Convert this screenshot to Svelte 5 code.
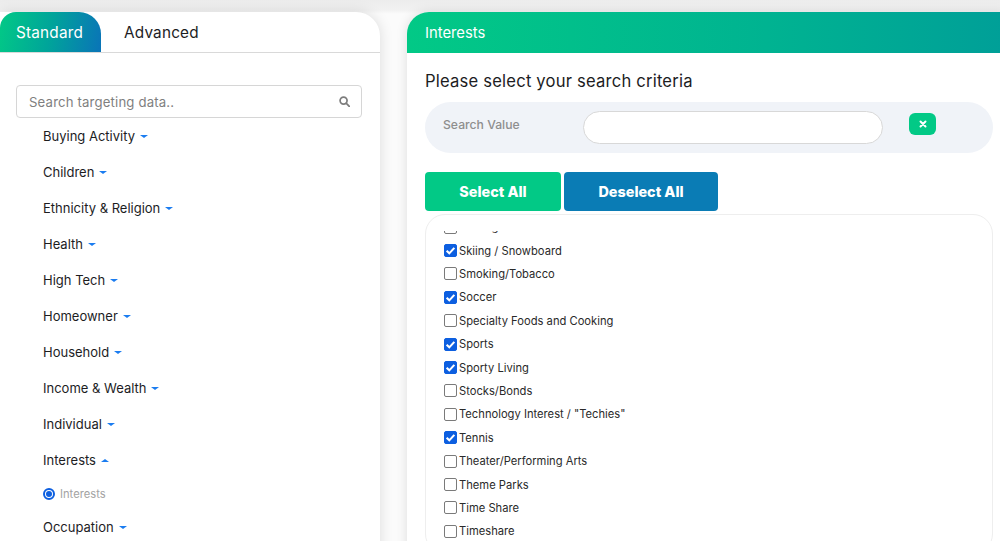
<script>
  const categories = [
    { name: 'Buying Activity' },
    { name: 'Children' },
    { name: 'Ethnicity & Religion' },
    { name: 'Health' },
    { name: 'High Tech' },
    { name: 'Homeowner' },
    { name: 'Household' },
    { name: 'Income & Wealth' },
    { name: 'Individual' },
    { name: 'Interests', open: true, sub: 'Interests' },
    { name: 'Occupation' }
  ];

  const interests = [
    { label: 'Skating', on: false },
    { label: 'Skiing / Snowboard', on: true },
    { label: 'Smoking/Tobacco', on: false },
    { label: 'Soccer', on: true },
    { label: 'Specialty Foods and Cooking', on: false },
    { label: 'Sports', on: true },
    { label: 'Sporty Living', on: true },
    { label: 'Stocks/Bonds', on: false },
    { label: 'Technology Interest / "Techies"', on: false },
    { label: 'Tennis', on: true },
    { label: 'Theater/Performing Arts', on: false },
    { label: 'Theme Parks', on: false },
    { label: 'Time Share', on: false },
    { label: 'Timeshare', on: false }
  ];
</script>

<div class="page">
  <section class="left-card">
    <div class="tabs">
      <button type="button" class="tab active">Standard</button>
      <button type="button" class="tab">Advanced</button>
    </div>
    <div class="left-body">
      <div class="search-box">
        <span class="placeholder">Search targeting data..</span>
        <svg width="11" height="11" viewBox="0 0 12 12" fill="none" stroke="#7d7d7d" stroke-width="1.9">
          <circle cx="5" cy="5" r="3.8" />
          <path d="M8 8l3.2 3.2" stroke-linecap="round" />
        </svg>
      </div>
      <ul class="categories">
        {#each categories as cat}
          <li class="category">
            <span>{cat.name}</span>
            <i class="caret" class:up={cat.open}></i>
          </li>
          {#if cat.sub}
            <li class="sub">
              <i class="radio"></i>
              <span>{cat.sub}</span>
            </li>
          {/if}
        {/each}
      </ul>
    </div>
  </section>

  <section class="right-card">
    <header class="right-head">Interests</header>
    <div class="right-body">
      <h2>Please select your search criteria</h2>
      <div class="criteria">
        <span class="criteria-label">Search Value</span>
        <div class="criteria-input"></div>
        <button type="button" class="clear" aria-label="Clear">
          <svg width="8" height="8" viewBox="0 0 8 8" stroke="#fff" stroke-width="2" stroke-linecap="round">
            <path d="M1.5 1.5l5 5M6.5 1.5l-5 5" />
          </svg>
        </button>
      </div>
      <div class="actions">
        <button type="button" class="select-all">Select All</button>
        <button type="button" class="deselect-all">Deselect All</button>
      </div>
      <div class="list">
        <div class="list-scroll">
          {#each interests as item}
            <label class="row">
              <i class="box" class:on={item.on}>
                {#if item.on}
                  <svg width="11" height="11" viewBox="0 0 10 10" fill="none" stroke="#fff" stroke-width="1.9">
                    <path d="M1.5 5.2l2.4 2.4 4.6-5" />
                  </svg>
                {/if}
              </i>
              <span>{item.label}</span>
            </label>
          {/each}
        </div>
      </div>
    </div>
  </section>
</div>

<style>
  :global(body) {
    margin: 0;
    background: #fff;
  }

  .page {
    display: flex;
    align-items: flex-start;
    gap: 27px;
    height: 541px;
    box-sizing: border-box;
    padding-top: 12px;
    overflow: hidden;
    font-family: Inter, 'Open Sans', sans-serif;
    color: #1d1d1f;
    background: linear-gradient(180deg, #ececec 0, #f1f1f1 10px, #fbfbfb 14px);
  }

  .left-card {
    flex: 0 0 380px;
    height: 560px;
    background: #fff;
    border-radius: 0 24px 0 0;
    box-shadow: 0 0 14px rgba(0, 0, 0, 0.13);
  }

  .tabs {
    display: flex;
    height: 40px;
    border-bottom: 1px solid #d9d9d9;
  }

  .tab {
    border: 0;
    background: none;
    font: inherit;
    font-size: 15.3px;
    letter-spacing: 0.2px;
    color: #1d1d1f;
    padding: 0 0 0 23px;
  }

  .tab.active {
    width: 101px;
    padding: 0 2px 0 0;
    color: #fff;
    border-radius: 16px 22px 0 0;
    background: linear-gradient(100deg, #02c986 0%, #00a49a 50%, #0a74b8 100%);
  }

  .left-body {
    padding: 32px 18px 0 16px;
  }

  .search-box {
    display: flex;
    align-items: center;
    justify-content: space-between;
    height: 31px;
    padding: 0 11px 0 12px;
    border: 1px solid #d6d6d6;
    border-radius: 4px;
  }

  .placeholder {
    font-size: 13.2px;
    letter-spacing: 0.15px;
    color: #7f7f7f;
  }

  .categories {
    list-style: none;
    margin: 0;
    padding: 0 0 0 27px;
  }

  .category {
    display: flex;
    align-items: center;
    gap: 5px;
    height: 36px;
    font-size: 13px;
  }

  .caret {
    width: 0;
    height: 0;
    border-left: 4px solid transparent;
    border-right: 4px solid transparent;
    border-top: 3.5px solid #1a7cf0;
  }

  .caret.up {
    border-top: 0;
    border-bottom: 3.5px solid #1a7cf0;
  }

  .sub {
    display: flex;
    align-items: center;
    gap: 5px;
    height: 31px;
    font-size: 11.2px;
    color: #a3a3a3;
  }

  .radio {
    width: 6px;
    height: 6px;
    border: 3px solid #fff;
    border-radius: 50%;
    background: #0d5fe0;
    outline: 2px solid #0d5fe0;
    outline-offset: -2px;
  }

  .right-card {
    flex: 0 0 600px;
    height: 560px;
    background: #fff;
    border-radius: 22px 0 0 0;
    box-shadow: 0 0 12px rgba(0, 0, 0, 0.12);
  }

  .right-head {
    display: flex;
    align-items: center;
    height: 41px;
    padding-left: 18px;
    font-size: 14.8px;
    color: #fff;
    border-radius: 22px 0 0 0;
    background: linear-gradient(90deg, #02c986 0%, #00b391 60%, #009f98 100%);
  }

  .right-body {
    padding: 18px 14px 0 18px;
  }

  h2 {
    margin: 0 0 10px;
    font-size: 16.6px;
    letter-spacing: 0.2px;
    line-height: 21px;
    font-weight: 400;
    color: #1d1d1f;
  }

  .criteria {
    display: flex;
    align-items: center;
    height: 51px;
    padding-left: 18px;
    border-radius: 26px;
    background: #f0f3f8;
  }

  .criteria-label {
    width: 140px;
    margin-bottom: 6px;
    font-size: 12.2px;
    font-weight: 500;
    color: #8e8e8e;
  }

  .criteria-input {
    width: 298px;
    height: 31px;
    background: #fff;
    border: 1px solid #d8d8d8;
    border-radius: 17px;
  }

  .clear {
    display: flex;
    align-items: center;
    justify-content: center;
    width: 27px;
    height: 22px;
    margin: -7px 0 0 26px;
    padding: 0;
    border: 0;
    border-radius: 6px;
    background: #02c986;
  }

  .actions {
    display: flex;
    gap: 3px;
    margin-top: 19px;
  }

  .actions button {
    height: 39px;
    border: 0;
    border-radius: 4px;
    font: inherit;
    font-size: 14.4px;
    font-weight: 800;
    color: #fff;
  }

  .select-all {
    width: 136px;
    background: #02c986;
  }

  .deselect-all {
    width: 154px;
    background: #0a7cb5;
  }

  .list {
    height: 340px;
    margin-top: 3px;
    padding: 16px 0 0 18px;
    border: 1px solid #eeeeee;
    border-radius: 20px;
    box-sizing: border-box;
  }

  .list-scroll {
    height: 320px;
    overflow: hidden;
  }

  .row {
    display: flex;
    align-items: center;
    gap: 2px;
    height: 23.42px;
    font-size: 11.2px;
    color: #2a2a2a;
  }

  .row:first-child {
    margin-top: -15.6px;
  }

  .box {
    display: flex;
    align-items: center;
    justify-content: center;
    flex: none;
    width: 11px;
    height: 11px;
    border: 1px solid #7a7a7a;
    border-radius: 2px;
    background: #fff;
  }

  .box.on {
    border-color: #0d5fe0;
    background: #0d5fe0;
  }
</style>
